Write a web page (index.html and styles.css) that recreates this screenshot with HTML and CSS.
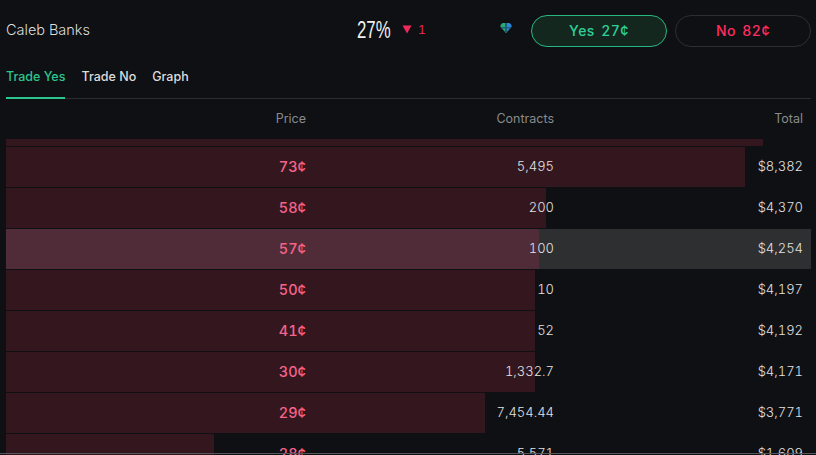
FILE: index.html
```html
<!DOCTYPE html>
<html lang="en">
<head>
<meta charset="utf-8">
<title>Caleb Banks</title>
<link rel="stylesheet" href="styles.css">
</head>
<body>
<main class="page">
  <header class="top">
    <div class="name">Caleb Banks</div>
    <div class="chance">
      <span class="pct">27%</span>
      <span class="delta"><svg class="tri" viewBox="0 0 10 9" width="10" height="9"><path d="M0.5 0.5H9.5L5 8.5Z" fill="#f0295c"/></svg><span class="delta-n">1</span></span>
    </div>
    <svg class="gem" viewBox="0 0 12 12" width="12" height="12">
      <path d="M2.5 1H6V11L0.5 5V3Z" fill="#2aa876"/>
      <path d="M6 1H9.5L11.5 3V5L6 11Z" fill="#2f86e0"/>
      <path d="M5 1H7V11H5Z" fill="#1d5f78"/>
      <path d="M0.5 5H11.5L10 6.5H2Z" fill="#1d5f78"/>
    </svg>
    <div class="btn btn-yes">Yes 27¢</div>
    <div class="btn btn-no">No 82¢</div>
  </header>
  <nav class="tabs">
    <span class="tab tab-on">Trade Yes</span>
    <span class="tab">Trade No</span>
    <span class="tab">Graph</span>
  </nav>
  <div class="cols">
    <span>Price</span><span>Contracts</span><span>Total</span>
  </div>
  <section class="book">
    <div class="row row-peek"><i class="bar" style="width:757px"></i></div>
    <div class="row"><i class="bar" style="width:739px"></i><b class="price">73¢</b><span class="num">5,495</span><span class="num">$8,382</span></div>
    <div class="row"><i class="bar" style="width:540px"></i><b class="price">58¢</b><span class="num">200</span><span class="num">$4,370</span></div>
    <div class="row row-hover"><i class="bar" style="width:533px"></i><b class="price">57¢</b><span class="num">100</span><span class="num">$4,254</span></div>
    <div class="row"><i class="bar" style="width:529px"></i><b class="price">50¢</b><span class="num">10</span><span class="num">$4,197</span></div>
    <div class="row"><i class="bar" style="width:529px"></i><b class="price">41¢</b><span class="num">52</span><span class="num">$4,192</span></div>
    <div class="row"><i class="bar" style="width:529px"></i><b class="price">30¢</b><span class="num">1,332.7</span><span class="num">$4,171</span></div>
    <div class="row"><i class="bar" style="width:479px"></i><b class="price">29¢</b><span class="num">7,454.44</span><span class="num">$3,771</span></div>
    <div class="row"><i class="bar" style="width:208px"></i><b class="price">28¢</b><span class="num">5,571</span><span class="num">$1,609</span></div>
  </section>
</main>
<div class="edge"></div>
</body>
</html>
```
FILE: styles.css
```css
* { box-sizing: border-box; }
html, body { margin: 0; height: 100%; overflow: hidden; background: #0e1013; }
body { font-family: Inter, "Liberation Sans", sans-serif; color: #e6e6e6; position: relative; font-variant-numeric: tabular-nums; }
.page { padding: 0 5px 0 6px; height: 455px; overflow: hidden; }

.top { display: flex; align-items: center; height: 59px; padding-top: 0; }
.name { width: 351px; font-size: 14.5px; font-weight: 300; color: #dcdddd; }
.chance { display: flex; align-items: center; width: 143px; }
.pct { display: inline-block; font-family: "Liberation Sans", sans-serif; font-size: 24px; color: #f0f0f0; width: 45px; transform: scaleX(.7); transform-origin: left center; }
.delta { display: flex; align-items: center; gap: 6px; font-size: 12px; color: #e0285a; }
.gem { margin: -3px 19px 0 0; flex: none; }
.btn { flex: none; width: 136px; height: 32px; border-radius: 16px; display: flex; align-items: center; justify-content: center; font-size: 14px; font-weight: 500; letter-spacing: .5px; word-spacing: 2px; margin-top: 2px; }
.btn-yes { background: #13271f; border: 1px solid #25b682; color: #2fd096; margin-right: 8px; }
.btn-no { border: 1px solid #2d2e31; color: #ff2c60; }

.tabs { display: flex; gap: 16px; height: 40px; border-bottom: 1px solid #2b2c2e; }
.tab { font-size: 12.5px; font-weight: 500; color: #dcdcdc; padding-top: 10px; }
.tab-on { color: #2cc58e; border-bottom: 2px solid #2cc58e; height: 40px; }

.cols { display: grid; grid-template-columns: 300px 248px 249px; height: 40px; padding-top: 12px; font-size: 12.5px; color: #8a8b8d; text-align: right; }

.book { display: flex; flex-direction: column; gap: 1px; }
.row { position: relative; display: grid; grid-template-columns: 300px 248px 249px; align-items: center; height: 40px; text-align: right; font-size: 13px; font-weight: 300; color: #e2e2e2; padding-bottom: 2px; }
.row-peek { height: 7px; padding: 0; }
.row-hover { background: #2d2f31; }
.bar { position: absolute; left: 0; top: 0; bottom: 0; background: #34161e; }
.row-hover .bar { background: #4f2c37; }
.price, .num { position: relative; }
.price { font-size: 14.5px; font-weight: 500; color: #f5638b; }

.edge { position: absolute; left: 0; right: 0; top: 453px; height: 1px; background: #55565a; }
```
